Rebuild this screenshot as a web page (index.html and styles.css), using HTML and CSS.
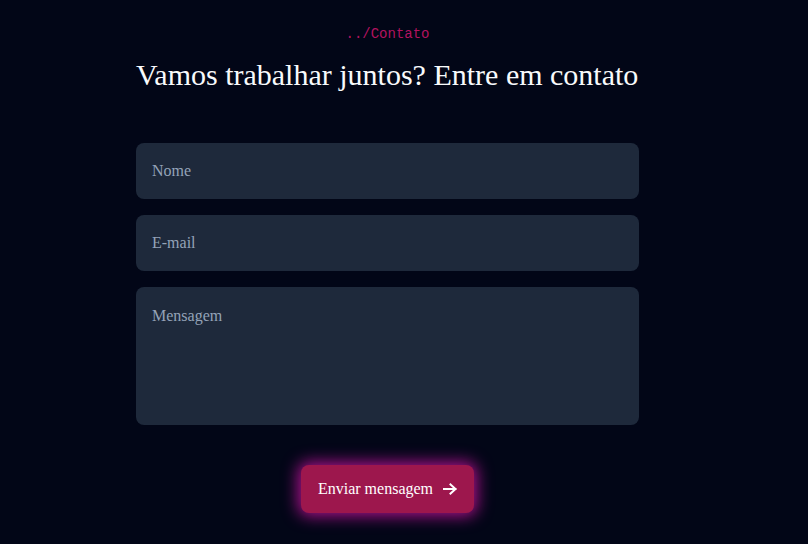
FILE: index.html
```html
<!DOCTYPE html>
<html lang="pt">
<head>
<meta charset="utf-8">
<link rel="stylesheet" href="styles.css">
</head>
<body>
<section class="contact">
  <p class="crumb">../Contato</p>
  <h1 class="title">Vamos trabalhar juntos? Entre em contato</h1>
  <form class="form">
    <input class="field" type="text" placeholder="Nome">
    <input class="field" type="email" placeholder="E-mail">
    <textarea class="field area" placeholder="Mensagem"></textarea>
    <button class="send" type="button">Enviar mensagem
      <svg class="arrow" width="14" height="12" viewBox="0 0 14 12" aria-hidden="true">
        <path d="M1 6H12.5M7.5 1.5L12.5 6L7.5 10.5" fill="none" stroke="#ffffff" stroke-width="2" stroke-linecap="square"/>
      </svg>
    </button>
  </form>
</section>
</body>
</html>
```
FILE: styles.css
```css
html, body {
  margin: 0;
  padding: 0;
  background: #020617;
  height: 100%;
}
body {
  font-family: "Liberation Serif", "Times New Roman", serif;
  color: #f8fafc;
}
.contact {
  width: 503px;
  margin-left: 136px;
  padding-top: 24px;
  display: flex;
  flex-direction: column;
}
.crumb {
  margin: 0;
  text-align: center;
  font-family: "Liberation Mono", monospace;
  font-size: 14px;
  line-height: 20px;
  color: #b3135f;
}
.title {
  margin: 11px 0 0 0;
  font-weight: normal;
  font-size: 30px;
  line-height: 40px;
  color: #f8fafc;
}
.form {
  margin-top: 48px;
  display: flex;
  flex-direction: column;
  gap: 16px;
}
.field {
  box-sizing: border-box;
  width: 100%;
  height: 56px;
  border: none;
  border-radius: 8px;
  background: #1e293b;
  padding: 0 16px;
  font-family: "Liberation Serif", serif;
  font-size: 16px;
  color: #e2e8f0;
  outline: none;
}
.field::placeholder {
  color: #94a3b8;
}
.area {
  height: 138px;
  padding: 20px 16px;
  resize: none;
  display: block;
}
.send {
  align-self: center;
  margin-top: 24px;
  height: 48px;
  width: 173px;
  padding: 0 0 0 0;
  border: none;
  border-radius: 8px;
  background: #9d174d;
  color: #ffffff;
  font-family: "Liberation Serif", serif;
  font-size: 16px;
  display: flex;
  align-items: center;
  justify-content: center;
  gap: 10px;
  box-shadow: 0 0 16px 3px rgba(214, 20, 170, 0.8);
}
.arrow {
  display: block;
}
```
